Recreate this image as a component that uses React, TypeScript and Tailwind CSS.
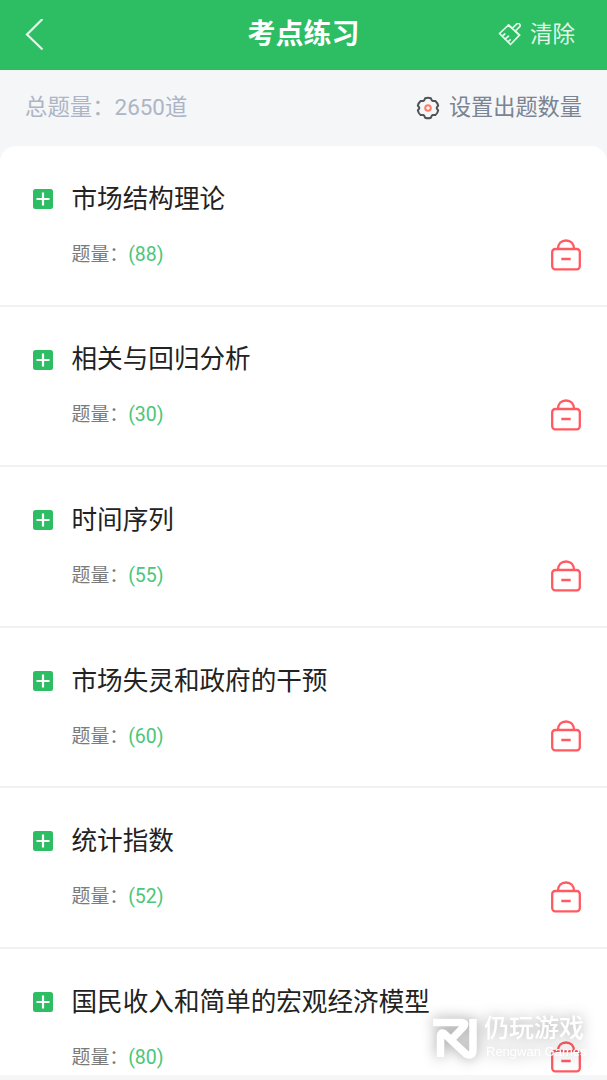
import React from 'react';

interface Topic {
  title: string;
  count: number;
}

const topics: Topic[] = [
  { title: '市场结构理论', count: 88 },
  { title: '相关与回归分析', count: 30 },
  { title: '时间序列', count: 55 },
  { title: '市场失灵和政府的干预', count: 60 },
  { title: '统计指数', count: 52 },
  { title: '国民收入和简单的宏观经济模型', count: 80 }
];

function BackIcon() {
  return (
    <svg className="w-5 h-8" viewBox="0 0 20 32" fill="none" stroke="#e2f7e9" strokeWidth="2.2">
      <path d="M18.5 0 3 15.500l15.500 15" />
    </svg>
  );
}

function BrushIcon() {
  return (
    <svg className="w-6 h-6" viewBox="0 0 24 24" fill="none" stroke="#e2f7e9" strokeWidth="1.7" strokeLinejoin="round" strokeLinecap="round">
      <path d="M1.5 10.500 10.500 2l3.700 3.300L18.800.8q1.500-1 2.700.2t.2 2.700L17.300 8.200l4.200 4L12.500 21.500z" />
      <path d="m10.500 2 11 10.200M4.500 13l2.300-2M7.200 16l3.300-2.800M10 18.800l2.200-2" />
    </svg>
  );
}

function GearIcon() {
  return (
    <svg className="w-6 h-6" viewBox="0 0 24 24" fill="none" strokeWidth="2">
      <path
        stroke="#505256"
        strokeLinejoin="round"
        d="M9.200 2.200Q12 1.200 14.800 2.200L15.800 4.400L17 5.100L19.400 4.900Q21.600 6.800 22.200 9.600L20.800 11.400V12.600L22.200 14.400Q21.600 17.200 19.400 19.100L17 18.900L15.800 19.600L14.800 21.800Q12 22.800 9.200 21.800L8.200 19.600L7 18.900L4.600 19.100Q2.400 17.200 1.800 14.400L3.200 12.600V11.400L1.800 9.600Q2.400 6.800 4.600 4.900L7 5.100L8.200 4.400Z"
      />
      <circle cx="12" cy="12" r="2.8" stroke="#ff7d66" />
    </svg>
  );
}

function LockIcon() {
  return (
    <svg className="w-8 h-8" viewBox="0 0 32 32" fill="none" stroke="#ff5a60" strokeWidth="2.3">
      <rect x="2.2" y="10" width="27.6" height="20.3" rx="3" />
      <path d="M8 10c0-5.500 3.500-8.500 8-8.500s8 3 8 8.500M11.300 20h9.400" />
    </svg>
  );
}

function PlusIcon() {
  return (
    <svg className="w-5 h-5" viewBox="0 0 20 20">
      <rect width="20" height="20" rx="2.5" fill="#2dbd62" />
      <path d="M10 3.500v13M3.500 10h13" stroke="#fff" strokeWidth="2.2" />
    </svg>
  );
}

function TopicRow({ title, count }: Topic) {
  return (
    <div className="h-[160.6px] shrink-0 border-b-2 border-[#f1f1f2] pl-[33px] pr-[25px] pt-[34px]">
      <div className="flex items-center h-[38px]">
        <PlusIcon />
        <h2 className="ml-[18.5px] text-[25.6px] text-[#222]">{title}</h2>
      </div>
      <div className="flex items-center justify-between h-8 mt-[20.5px]">
        <p className="ml-[38.5px] text-[18.9px] text-[#7b7b7b] whitespace-nowrap">
          题量：<span className="text-[19.5px] text-[#4cc67a]">({count})</span>
        </p>
        <LockIcon />
      </div>
    </div>
  );
}

function Watermark() {
  return (
    <div className="absolute left-[432px] top-[1014px] flex items-start text-white drop-shadow-[0_0_7px_rgba(0,0,0,0.38)]">
      <svg className="w-[46px] h-[46px]" viewBox="0 0 46 46" fill="none" stroke="#fff" strokeWidth="7.5" strokeLinejoin="round">
        <path d="M1 8.500h28q6 0 2 5L18 27" />
        <path d="M41 5v31q0 7-7 4L12 19.500q-3.500-2-3.500 3V43" />
      </svg>
      <div className="ml-[6px] whitespace-nowrap">
        <div className="text-[25px] leading-[30px] font-medium">仍玩游戏</div>
        <div className="ml-[2px] font-['Liberation_Sans'] text-[13px] leading-[16px]">Rengwan Games</div>
      </div>
    </div>
  );
}

export default function App() {
  return (
    <div className="relative flex flex-col w-[607px] h-[1080px] overflow-hidden bg-[#f5f6f8] font-[Roboto,'Noto_Sans_CJK_SC',sans-serif]">
      {/* Header */}
      <header className="grid grid-cols-3 items-center h-[70px] shrink-0 bg-[#2dbd62] px-6">
        <BackIcon />
        <h1 className="text-center text-[28px] font-bold text-white">考点练习</h1>
        <button className="flex items-center justify-end gap-2 pr-2 text-[22.5px] text-[#e2f7e9]">
          <BrushIcon />
          <span>清除</span>
        </button>
      </header>

      {/* Question totals */}
      <div className="flex items-center justify-between h-[76px] shrink-0 px-[25px] text-[22.2px]">
        <span className="text-[22.4px] text-[#adb5c4]">总题量：2650道</span>
        <button className="flex items-center gap-[9px] text-[#7a8492]">
          <GearIcon />
          <span>设置出题数量</span>
        </button>
      </div>

      {/* Topics */}
      <main className="flex flex-col h-[929px] shrink-0 overflow-hidden rounded-t-[16px] bg-white">
        {topics.map(topic => (
          <TopicRow key={topic.title} {...topic} />
        ))}
      </main>

      <Watermark />
    </div>
  );
}
